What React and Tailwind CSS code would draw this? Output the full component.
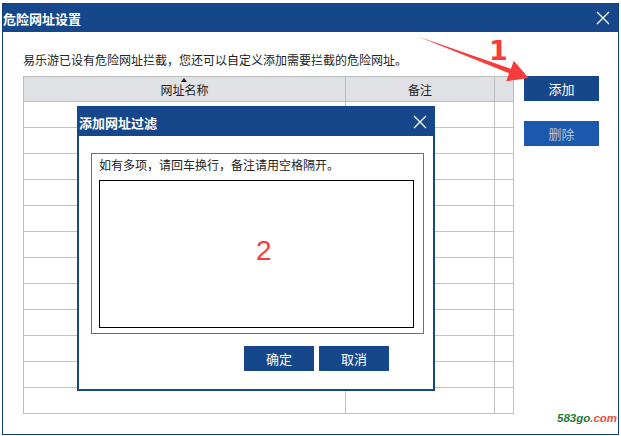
import React from "react";

const cjk = "font-['Noto_Sans_CJK_SC','Microsoft_YaHei',sans-serif]";

function CloseIcon({ className = "" }) {
  return (
    <svg viewBox="0 0 14 14" className={className} fill="none" stroke="white" strokeWidth="1.3">
      <path d="M1 1 L13 13 M13 1 L1 13" />
    </svg>
  );
}

function Arrow() {
  return (
    <svg className="absolute left-0 top-0 pointer-events-none" width="621" height="436" viewBox="0 0 621 436">
      <polygon
        points="418,36.5 510.9,68.7 513.8,60.7 528.7,78 506.2,81.3 509.1,73.3"
        fill="#f53d3d"
      />
    </svg>
  );
}

export default function App() {
  const rows = Array.from({ length: 12 });

  return (
    <div className={`relative w-[621px] h-[436px] overflow-hidden bg-white ${cjk}`}>
      {/* main window */}
      <div className="ml-[2px] mt-[3px] w-[617px] h-[432px] border border-[#123f7c] flex flex-col">
        <div className="h-[28px] bg-[#15478a] flex items-center justify-between pr-[8px]">
          <span className="text-[13px] font-bold text-white leading-none">危险网址设置</span>
          <CloseIcon className="w-[14px] h-[14px]" />
        </div>

        <div className="pl-[20px] pt-[20px]">
          <p className="text-[12px] leading-[16px] text-[#222]">
            易乐游已设有危险网址拦截，您还可以自定义添加需要拦截的危险网址。
          </p>

          <div className="flex mt-[8px]">
            <div className="w-[491px] border-l border-t border-[#bdbdbd]">
              <div className="grid grid-cols-[322px_149px_19px] h-[25px] bg-[#dfe1e5] text-[12px] text-[#222]">
                <div className="relative border-r border-b border-[#bdbdbd] flex items-center justify-center">
                  <span className="absolute top-[1px] left-[157px] w-0 h-0 border-l-[3px] border-r-[3px] border-b-[4px] border-l-transparent border-r-transparent border-b-[#222]" />
                  <span className="mt-[2px]">网址名称</span>
                </div>
                <div className="border-r border-b border-[#bdbdbd] flex items-center justify-center">
                  <span className="mt-[2px]">备注</span>
                </div>
                <div className="border-r border-b border-[#bdbdbd]" />
              </div>
              {rows.map((_, i) => (
                <div key={i} className="grid grid-cols-[322px_149px_19px] h-[26px]">
                  <div className="border-r border-b border-[#c2c2c2]" />
                  <div className="border-r border-b border-[#c2c2c2]" />
                  <div className="border-r border-b border-[#c2c2c2]" />
                </div>
              ))}
            </div>

            <div className="ml-[10px] flex flex-col gap-[20px]">
              <button className="w-[75px] h-[25px] bg-[#15478a] text-white text-[13px]">添加</button>
              <button className="w-[75px] h-[25px] bg-[#1b59ad] text-[#b9c3d3] text-[13px]">删除</button>
            </div>
          </div>
        </div>
      </div>

      {/* annotation 1 */}
      <span className="absolute left-[489px] top-[37px] text-[27px] font-bold leading-none text-[#f53d3d] font-['DejaVu_Sans',sans-serif]">
        1
      </span>
      <Arrow />

      {/* sub dialog */}
      <div className="absolute left-[77px] top-[106px] w-[358px] h-[285px] bg-white border-2 border-[#15478a] flex flex-col">
        <div className="h-[28px] bg-[#15478a] flex items-center justify-between pr-[6px]">
          <span className="text-[13px] font-bold text-white leading-none">添加网址过滤</span>
          <CloseIcon className="w-[14px] h-[14px]" />
        </div>

        <div className="ml-[12px] mt-[17px] w-[333px] h-[181px] border border-[#e23c3c] pl-[7px] pt-[3px]">
          <p className="text-[12px] leading-[16px] text-[#222]">如有多项，请回车换行，备注请用空格隔开。</p>
          <div className="relative mt-[7px] w-[315px] h-[148px] border border-black">
            <span className="absolute left-[156px] top-[56px] text-[28px] leading-none text-[#f53d3d] font-['Liberation_Sans',sans-serif]">
              2
            </span>
          </div>
        </div>

        <div className="mt-[12px] flex justify-end gap-[5px] pr-[44px]">
          <button className="w-[70px] h-[25px] bg-[#15478a] text-white text-[13px]">确定</button>
          <button className="w-[70px] h-[25px] bg-[#15478a] text-white text-[13px]">取消</button>
        </div>
      </div>

      {/* watermark */}
      <span className="absolute left-[557px] top-[413px] text-[11.5px] font-bold italic leading-none font-['Liberation_Sans',sans-serif]">
        <span className="text-[#1e7b34]">583go</span>
        <span className="text-[#e8503a]">.com</span>
      </span>
    </div>
  );
}
